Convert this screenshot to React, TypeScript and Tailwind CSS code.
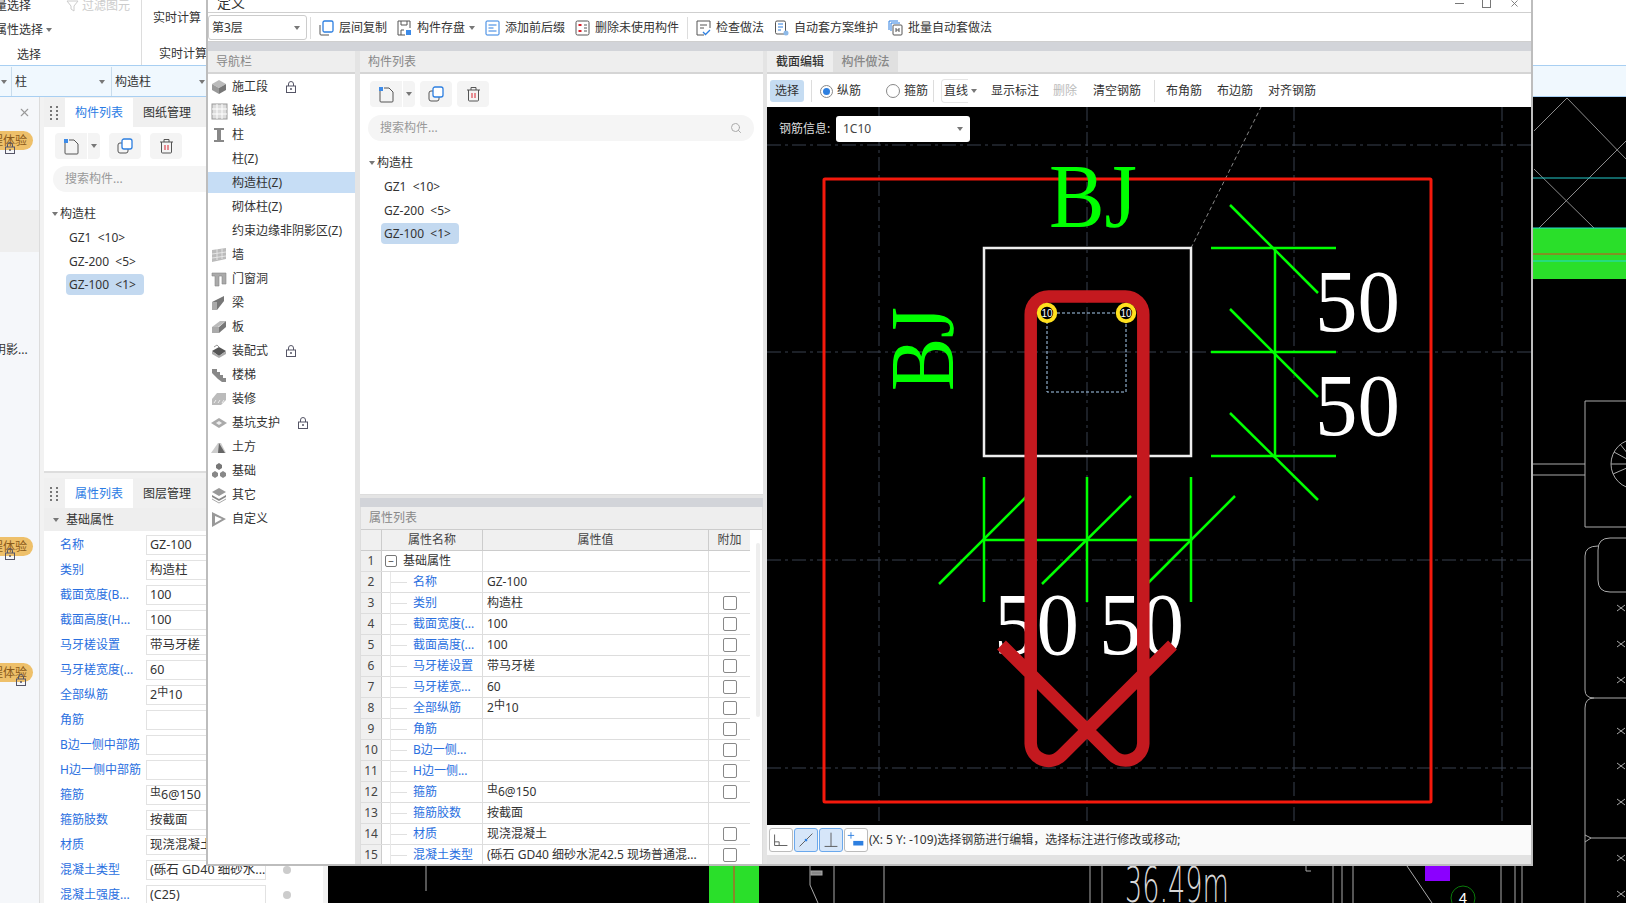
import { Search, X } from "lucide-react";

const Caret = ({ className = "" }: { className?: string }) => (
  <span className={`inline-block h-0 w-0 border-x-[3px] border-t-[4px] border-x-transparent border-t-[#777] ${className}`} />
);

const CopyIcon = () => (
  <svg width="16" height="16" viewBox="0 0 16 16" fill="none">
    <rect x="1" y="5" width="10" height="10" rx="2" stroke="#555" />
    <rect x="5" y="1" width="10" height="10" rx="2" fill="#fff" stroke="#2d7fe0" strokeWidth="1.3" />
  </svg>
);

const NewIcon = () => (
  <svg width="17" height="17" viewBox="0 0 17 17" fill="none">
    <path d="M2 5v10a1 1 0 0 0 1 1h11a1 1 0 0 0 1-1V6l-4-4H6" stroke="#555" />
    <rect x="1" y="1" width="4" height="4" fill="#3d8be8" />
  </svg>
);

const TrashIcon = () => (
  <svg width="15" height="16" viewBox="0 0 15 16" fill="none">
    <path d="M1 4h13M5 4V1.5h5V4M2.5 4v10a1 1 0 0 0 1 1h8a1 1 0 0 0 1-1V4" stroke="#555" />
    <path d="M6 7v5M9 7v5" stroke="#d9232e" />
  </svg>
);

const LockIcon = () => (
  <svg width="10" height="12" viewBox="0 0 10 12" fill="none">
    <path d="M2.5 5V3a2.5 2.5 0 0 1 5 0v2" stroke="#556" />
    <rect x=".5" y="5" width="9" height="6.5" stroke="#556" />
    <circle cx="5" cy="8" r="1" fill="#556" />
  </svg>
);

const ToolIcon = ({ kind }: { kind: string }) => (
  <svg width="15" height="16" viewBox="0 0 15 16" fill="none">
    {kind === "copy" && (
      <>
        <path d="M1 5v9a1 1 0 0 0 1 1h8" stroke="#555" />
        <rect x="4" y="1" width="10" height="11" rx="1.5" stroke="#2d7fe0" strokeWidth="1.3" />
      </>
    )}
    {kind === "save" && (
      <>
        <path d="M1 1h12v7M1 1v14h7" stroke="#555" />
        <path d="M4 1v4h6V1M4 15v-5h3" stroke="#555" />
        <rect x="9" y="10" width="5" height="5" fill="#3d8be8" />
      </>
    )}
    {kind === "fix" && (
      <>
        <rect x="1" y="1" width="13" height="14" rx="1" stroke="#2d7fe0" />
        <path d="M3.5 5h8M3.5 8h5M3.5 11h8" stroke="#2d7fe0" />
      </>
    )}
    {kind === "del" && (
      <>
        <rect x="1" y="1" width="13" height="14" rx="1.5" stroke="#555" />
        <path d="M3.5 4h3v2h-3zM3.5 10h3v2h-3z" fill="#d9232e" />
        <path d="M9 5h3M9 8h3M9 11h3" stroke="#555" />
      </>
    )}
    {kind === "check" && (
      <>
        <path d="M8 15H1V1h13v7" stroke="#555" />
        <path d="M4 5h7M4 8h4" stroke="#555" />
        <path d="M7 12l2.5 2.5L14 10" stroke="#2d7fe0" strokeWidth="1.3" />
      </>
    )}
    {kind === "auto" && (
      <>
        <rect x="1.5" y="1" width="10" height="13" rx="1.5" stroke="#555" />
        <path d="M4 4h5M4 7h5M4 10h3" stroke="#2d7fe0" />
        <circle cx="12" cy="13" r="2.5" fill="#8db9e8" />
      </>
    )}
    {kind === "batch" && (
      <>
        <path d="M1 10V1h9" stroke="#2d7fe0" />
        <path d="M3 11V3h9" stroke="#2d7fe0" />
        <rect x="5" y="5" width="9" height="10" rx="1" stroke="#555" />
        <path d="M8 8v4M11 8v4M8 10h3" stroke="#555" />
      </>
    )}
  </svg>
);

const NavIcon = ({ kind }: { kind: string }) => (
  <svg width="18" height="18" viewBox="0 0 18 18" className="shrink-0">
    {kind === "seg" && (
      <>
        <path d="M9 2l7 4-7 4-7-4z" fill="#bbb" />
        <path d="M2 6l7 4v6l-7-4z" fill="#999" />
        <path d="M16 6l-7 4v6l7-4z" fill="#777" />
      </>
    )}
    {kind === "axis" && (
      <>
        <rect x="2" y="2" width="15" height="15" fill="#ddd" stroke="#999" />
        <path d="M7 2v15M12 2v15M2 7h15M2 12h15" stroke="#fff" />
      </>
    )}
    {kind === "col" && <path d="M4 2h10v2h-3v10h3v2H4v-2h3V4H4z" fill="#888" />}
    {kind === "wall" && (
      <>
        <path d="M2 4l14-2v11L2 16z" fill="#bbb" />
        <path d="M2 8l14-2M2 12l14-2M7 3v11M12 3v10" stroke="#eee" strokeWidth=".8" />
      </>
    )}
    {kind === "door" && <path d="M2 3h14v11h-4V6H9v10H5V6H2z" fill="#aaa" stroke="#888" strokeWidth=".6" />}
    {kind === "beam" && (
      <>
        <path d="M2 8l12-6v5L7 16H2z" fill="#777" />
        <path d="M2 8h5v8H2z" fill="#aaa" />
      </>
    )}
    {kind === "slab" && (
      <>
        <path d="M2 9l8-6h6l-8 6z" fill="#bbb" />
        <path d="M2 9h7v6H2z" fill="#aaa" />
        <path d="M9 9l7-6v6l-7 6z" fill="#777" />
      </>
    )}
    {kind === "prefab" && (
      <>
        <path d="M2 9l7-4 7 4-7 5z" fill="#555" />
        <path d="M2 9v3l7 4 7-4V9l-7 5z" fill="#aaa" />
        <path d="M4 5l3-2 2 2" stroke="#999" fill="none" />
      </>
    )}
    {kind === "stair" && <path d="M2 3h5v3h3v3h3v3h3v4h-4l-4-3-3-3-3-3z" fill="#888" />}
    {kind === "deco" && (
      <>
        <path d="M2 9l5-6h9v7l-5 5H2z" fill="#bbb" />
        <path d="M4 13l2-3M8 13l2-3M12 13l2-3" stroke="#eee" />
      </>
    )}
    {kind === "pit" && (
      <>
        <path d="M1 9l8-5 8 5-8 5z" fill="#aaa" />
        <path d="M6 9l3-2 3 2-3 2z" fill="#eee" />
      </>
    )}
    {kind === "earth" && (
      <>
        <path d="M1 15l7-10 3 0 5 10z" fill="#ccc" />
        <path d="M9 5l6 10H8z" fill="#666" />
      </>
    )}
    {kind === "found" && (
      <>
        <path d="M9 1l3 2v3l-3 2-3-2V3z" fill="#777" />
        <path d="M5 9l3 2v3l-3 2-3-2v-3zM13 9l3 2v3l-3 2-3-2v-3z" fill="#888" />
      </>
    )}
    {kind === "other" && (
      <>
        <path d="M9 2l7 4-7 4-7-4z" fill="#999" />
        <path d="M2 9l7 4 7-4v2l-7 4-7-4z" fill="#888" />
        <path d="M2 13l7 4 7-4" stroke="#aaa" fill="none" />
      </>
    )}
    {kind === "custom" && <path d="M2 2l14 7-14 8zM5 6v7l7-4z" fill="#999" fillRule="evenodd" />}
  </svg>
);

const navItems = [
  { label: "施工段", icon: "seg", lock: true },
  { label: "轴线", icon: "axis" },
  { label: "柱", icon: "col" },
  { label: "柱(Z)" },
  { label: "构造柱(Z)", active: true },
  { label: "砌体柱(Z)" },
  { label: "约束边缘非阴影区(Z)" },
  { label: "墙", icon: "wall" },
  { label: "门窗洞", icon: "door" },
  { label: "梁", icon: "beam" },
  { label: "板", icon: "slab" },
  { label: "装配式", icon: "prefab", lock: true },
  { label: "楼梯", icon: "stair" },
  { label: "装修", icon: "deco" },
  { label: "基坑支护", icon: "pit", lock: true },
  { label: "土方", icon: "earth" },
  { label: "基础", icon: "found" },
  { label: "其它", icon: "other" },
  { label: "自定义", icon: "custom" },
];

const toolItems = [
  { label: "层间复制", icon: "copy" },
  { label: "构件存盘", icon: "save", caret: true },
  { label: "添加前后缀", icon: "fix" },
  { label: "删除未使用构件", icon: "del", sep: true },
  { label: "检查做法", icon: "check" },
  { label: "自动套方案维护", icon: "auto" },
  { label: "批量自动套做法", icon: "batch" },
];

const Rebar = ({ sym, pre, post }: { sym: string; pre?: string; post: string }) => (
  <span>
    {pre}
    <span className="align-[3px] text-[11px] leading-[0]">{sym}</span>
    {post}
  </span>
);

const leftProps: { label: string; value?: React.ReactNode }[] = [
  { label: "名称", value: "GZ-100" },
  { label: "类别", value: "构造柱" },
  { label: "截面宽度(B...", value: "100" },
  { label: "截面高度(H...", value: "100" },
  { label: "马牙槎设置", value: "带马牙槎" },
  { label: "马牙槎宽度(...", value: "60" },
  { label: "全部纵筋", value: <Rebar pre="2" sym="中" post="10" /> },
  { label: "角筋" },
  { label: "B边一侧中部筋" },
  { label: "H边一侧中部筋" },
  { label: "箍筋", value: <Rebar sym="虫" post="6@150" /> },
  { label: "箍筋肢数", value: "按截面" },
  { label: "材质", value: "现浇混凝土" },
  { label: "混凝土类型", value: "(砾石 GD40 细砂水..." },
  { label: "混凝土强度...", value: "(C25)" },
];

const tableRows: { label: string; value?: React.ReactNode; check: boolean }[] = [
  { label: "名称", value: "GZ-100", check: false },
  { label: "类别", value: "构造柱", check: true },
  { label: "截面宽度(...", value: "100", check: true },
  { label: "截面高度(...", value: "100", check: true },
  { label: "马牙槎设置", value: "带马牙槎", check: true },
  { label: "马牙槎宽...", value: "60", check: true },
  { label: "全部纵筋", value: <Rebar pre="2" sym="中" post="10" />, check: true },
  { label: "角筋", check: true },
  { label: "B边一侧...", check: true },
  { label: "H边一侧...", check: true },
  { label: "箍筋", value: <Rebar sym="虫" post="6@150" />, check: true },
  { label: "箍筋胶数", value: "按截面", check: false },
  { label: "材质", value: "现浇混凝土", check: true },
  { label: "混凝土类型", value: "(砾石 GD40 细砂水泥42.5  现场普通混...", check: true },
];

const Pill = ({ className = "", lockLeft = "left-[5px]" }: { className?: string; lockLeft?: string }) => (
  <div className={`relative h-[19px] w-[33px] ${className}`}>
    <div className="flex h-full justify-end overflow-hidden rounded-r-full bg-[#eec06a] pr-[6px] text-[12px] leading-[19px] whitespace-nowrap text-[#8a5a1a]">
      程体验
    </div>
    <span className={`absolute top-[11px] ${lockLeft}`}>
      <LockIcon />
    </span>
  </div>
);

function Strip() {
  return (
    <div className="flex w-[40px] shrink-0 flex-col overflow-hidden border-r border-[#dcdcdc] bg-[#f5f7fa]">
      <div className="flex h-[30px] items-center justify-end pr-[8px]">
        <X size={13} className="text-[#999]" />
      </div>
      <Pill className="mt-[4px]" />
      <div className="mt-[60px] h-[42px] bg-[#eeeeee]" />
      <div className="mt-[90px] ml-[-6px] whitespace-nowrap text-[12px] leading-[16px] text-[#333]">阴影...</div>
      <Pill className="mt-[179px]" />
      <Pill className="mt-[107px]" lockLeft="left-[16px]" />
    </div>
  );
}

const Grip = () => (
  <div className="grid w-[21px] shrink-0 grid-cols-2 place-content-center justify-center gap-[2px] px-[6px]">
    {[0, 1, 2, 3, 4, 5, 6, 7].map((i) => (
      <span key={i} className="h-[2px] w-[2px] bg-[#777]" />
    ))}
  </div>
);

const PanelTabs = ({ a, b }: { a: string; b: string }) => (
  <div className="flex h-[30px] shrink-0 bg-[#f0f0f0] pt-[1px] text-[12px]">
    <Grip />
    <div className="flex w-[68px] items-center justify-center bg-white text-[#2a7be4]">{a}</div>
    <div className="ml-[10px] flex items-center text-[#333]">{b}</div>
  </div>
);

function LeftPanel() {
  return (
    <div className="flex w-[279px] shrink-0 flex-col gap-[5px]">
      <div className="flex h-[376px] flex-col border-b-2 border-[#ddd] bg-white">
        <PanelTabs a="构件列表" b="图纸管理" />
        <div className="mt-[6px] ml-[11px] flex items-center">
          <div className="flex h-[26px] w-[32px] items-center justify-center rounded-l bg-[#f4f4f4]">
            <NewIcon />
          </div>
          <div className="ml-[1px] flex h-[26px] w-[12px] items-center justify-center rounded-r bg-[#f4f4f4]">
            <Caret />
          </div>
          <div className="ml-[9px] flex h-[26px] w-[32px] items-center justify-center rounded bg-[#f4f4f4]">
            <CopyIcon />
          </div>
          <div className="ml-[9px] flex h-[26px] w-[32px] items-center justify-center rounded bg-[#f4f4f4]">
            <TrashIcon />
          </div>
        </div>
        <div className="mt-[7px] ml-[9px] flex h-[26px] w-[230px] items-center rounded-full bg-[#f5f5f5] px-[12px] text-[12px] text-[#999]">
          搜索构件...
        </div>
        <Tree left={8} indent={14} />
      </div>
      <div className="flex flex-1 flex-col overflow-hidden bg-white text-[12px]">
        <PanelTabs a="属性列表" b="图层管理" />
        <div className="flex h-[23px] shrink-0 items-center bg-[#eeeeee] pl-[9px] text-[#333]">
          <Caret />
          <span className="ml-[7px]">基础属性</span>
        </div>
        <div className="flex flex-col gap-[5px] pt-[4px]">
          {leftProps.map((p, i) => (
            <div key={p.label} className="flex h-[20px] items-center">
              <span className="ml-[16px] w-[86px] shrink-0 whitespace-nowrap text-[#2a6fe0]">{p.label}</span>
              <span className="h-[20px] w-[120px] shrink-0 overflow-hidden border border-[#e2e2e2] px-[3px] text-[12.5px] leading-[18px] whitespace-nowrap text-[#333]">
                {p.value}
              </span>
              {i > 12 && <span className="ml-[17px] h-[8px] w-[8px] rounded-full bg-[#ccc]" />}
            </div>
          ))}
        </div>
      </div>
    </div>
  );
}

function Tree({ left, indent }: { left: number; indent: number }) {
  return (
    <div className="mt-[10px] text-[12px] text-[#333]" style={{ marginLeft: left }}>
      <div className="flex h-[24px] items-center">
        <Caret />
        <span className="ml-[2px]">构造柱</span>
      </div>
      <div className="flex h-[24px] items-center" style={{ marginLeft: indent + 3 }}>GZ1&nbsp;&nbsp;&lt;10&gt;</div>
      <div className="flex h-[23px] items-center" style={{ marginLeft: indent + 3 }}>GZ-200&nbsp;&nbsp;&lt;5&gt;</div>
      <div className="mt-[1px] flex h-[21px] w-[78px] items-center rounded bg-[#c3d9f0] pl-[3px]" style={{ marginLeft: indent }}>GZ-100&nbsp;&nbsp;&lt;1&gt;</div>
    </div>
  );
}

function NavPanel() {
  return (
    <div className="flex w-[147px] shrink-0 flex-col bg-white">
      <div className="flex h-[23px] shrink-0 items-center border-b-2 border-[#d5d5d5] bg-[#eeeeee] pl-[8px] text-[12px] text-[#888]">导航栏</div>
      <div className="pt-[2px] text-[12px] text-[#333]">
        {navItems.map((n) => (
          <div key={n.label} className={`mb-[3px] flex h-[21px] items-center pl-[2px] ${n.active ? "bg-[#c6ddf5]" : ""}`}>
            <span className="flex w-[22px] shrink-0 justify-start">{n.icon && <NavIcon kind={n.icon} />}</span>
            <span className="whitespace-nowrap">{n.label}</span>
            {n.lock && (
              <span className="ml-[18px]">
                <LockIcon />
              </span>
            )}
          </div>
        ))}
      </div>
    </div>
  );
}

function ComponentList() {
  return (
    <div className="flex h-[444px] shrink-0 flex-col border-b border-[#ddd] bg-white">
      <div className="flex h-[23px] shrink-0 items-center border-b-2 border-[#d5d5d5] bg-[#eeeeee] pl-[8px] text-[12px] text-[#888]">构件列表</div>
      <div className="mt-[7px] ml-[10px] flex items-center">
        <div className="flex h-[26px] w-[32px] items-center justify-center rounded-l bg-[#f4f4f4]">
          <NewIcon />
        </div>
        <div className="ml-[1px] flex h-[26px] w-[12px] items-center justify-center rounded-r bg-[#f4f4f4]">
          <Caret />
        </div>
        <div className="ml-[5px] flex h-[26px] w-[32px] items-center justify-center rounded bg-[#f4f4f4]">
          <CopyIcon />
        </div>
        <div className="ml-[5px] flex h-[26px] w-[32px] items-center justify-center rounded bg-[#f4f4f4]">
          <TrashIcon />
        </div>
      </div>
      <div className="mt-[8px] ml-[8px] flex h-[26px] w-[386px] items-center justify-between rounded-full bg-[#f5f5f5] px-[12px] text-[12px] text-[#999]">
        <span>搜索构件...</span>
        <Search size={12} className="text-[#aaa]" />
      </div>
      <Tree left={9} indent={12} />
    </div>
  );
}

function PropTable() {
  return (
    <div className="flex min-h-0 flex-1 flex-col overflow-hidden border-x border-[#ddd] bg-white">
      <div className="flex h-[23px] shrink-0 items-center border-b border-[#ccc] bg-[#eeeeee] pl-[8px] text-[12px] text-[#888]">属性列表</div>
      <div className="flex min-h-0 flex-1">
        <div className="w-[389px] shrink-0 text-[12px]">
          <div className="flex h-[21px] border-b border-[#ccc] bg-[#f0f0f0] text-center text-[#444]">
            <div className="w-[21px] border-r border-[#ccc]" />
            <div className="w-[101px] border-r border-[#ccc] leading-[20px]">属性名称</div>
            <div className="w-[226px] border-r border-[#ccc] leading-[20px]">属性值</div>
            <div className="flex-1 leading-[20px]">附加</div>
          </div>
          <Row n={1}>
            <div className="flex w-[101px] items-center border-r border-[#ddd] pl-[3px] text-[#333]">
              <span className="flex h-[12px] w-[12px] items-center justify-center rounded-[2px] border border-[#777] text-[10px] leading-none">−</span>
              <span className="ml-[6px]">基础属性</span>
            </div>
            <div className="w-[226px] border-r border-[#ddd]" />
          </Row>
          {tableRows.map((r, i) => (
            <Row key={r.label} n={i + 2}>
              <div className="flex w-[101px] items-center border-r border-[#ddd] pl-[8px] whitespace-nowrap text-[#2a6fe0]">
                <span className="mr-[6px] h-[21px] w-[17px] shrink-0 border-l border-[#e8e8e8] bg-[linear-gradient(#e0e0e0,#e0e0e0)] bg-[length:100%_1px] bg-center bg-no-repeat" />
                {r.label}
              </div>
              <div className="w-[226px] overflow-hidden border-r border-[#ddd] pl-[4px] whitespace-nowrap text-[#333]">{r.value}</div>
              <div className="flex flex-1 items-center justify-center">
                {r.check && <span className="h-[14px] w-[14px] rounded-[2px] border border-[#888] bg-white" />}
              </div>
            </Row>
          ))}
        </div>
        <div className="mt-[13px] ml-[6px] h-[174px] w-[4px] rounded bg-[#eeeeee]" />
      </div>
    </div>
  );
}

const Row = ({ n, children }: { n: number; children: React.ReactNode }) => (
  <div className="flex h-[21px] border-b border-[#ddd] leading-[20px]">
    <div className="w-[21px] shrink-0 border-r border-[#ccc] bg-[#f0f0f0] text-center text-[#444]">{n}</div>
    {children}
  </div>
);

function Section() {
  return (
    <div className="flex min-w-0 flex-1 flex-col bg-[#e2e2e2]">
      <div className="flex h-[23px] shrink-0 border-b-2 border-[#d5d5d5] bg-[#eeeeee] text-[12px] font-medium">
        <div className="flex w-[66px] items-center justify-center text-[#333]">截面编辑</div>
        <div className="flex w-[65px] items-center justify-center bg-[#e0e0e0] text-[#888]">构件做法</div>
      </div>
      <div className="flex h-[33px] shrink-0 items-center bg-white pt-[1px] text-[12px] whitespace-nowrap text-[#333]">
        <div className="ml-[3px] flex h-[22px] w-[34px] items-center justify-center rounded-[3px] bg-[#c5dcf2]">选择</div>
        <div className="ml-[7px] h-[22px] w-px bg-[#ddd]" />
        <span className="ml-[8px] flex h-[13px] w-[13px] items-center justify-center rounded-full border border-[#888]">
          <span className="h-[7px] w-[7px] rounded-full bg-[#2d7fe0]" />
        </span>
        <span className="ml-[4px]">纵筋</span>
        <span className="ml-[25px] h-[14px] w-[14px] rounded-full border border-[#888]" />
        <span className="ml-[4px]">箍筋</span>
        <div className="ml-[5px] h-[22px] w-px bg-[#ddd]" />
        <div className="ml-[7px] flex h-[24px] w-[27px] items-center rounded-l border-y border-l border-[#e5e5e5] pl-[2px]">直线</div>
        <Caret className="ml-[3px]" />
        <span className="ml-[14px]">显示标注</span>
        <span className="ml-[14px] text-[#bbb]">删除</span>
        <span className="ml-[16px]">清空钢筋</span>
        <div className="ml-[13px] h-[22px] w-px bg-[#ddd]" />
        <span className="ml-[11px]">布角筋</span>
        <span className="ml-[15px]">布边筋</span>
        <span className="ml-[15px]">对齐钢筋</span>
      </div>
      <div className="relative h-[718px] shrink-0 bg-black">
        <RebarCanvas />
        <div className="absolute top-[9px] left-[12px] flex items-center text-[12px] text-[#ddd]">
          <span className="w-[57px]">钢筋信息:</span>
          <div className="flex h-[26px] w-[134px] items-center justify-between rounded-[3px] bg-white px-[7px] text-[#444]">
            1C10
            <Caret />
          </div>
        </div>
      </div>
      <div className="flex h-[30px] shrink-0 items-center bg-[#fafafa] pl-[2px] text-[12px] whitespace-nowrap text-[#333]">
        <StatusBtn>
          <path d="M5 6v12h14M5 14h5v4" stroke="#555" fill="none" />
        </StatusBtn>
        <StatusBtn on>
          <path d="M5 19L19 5" stroke="#555" />
          <circle cx="12" cy="12" r="1.5" fill="#2d7fe0" />
        </StatusBtn>
        <StatusBtn on>
          <path d="M5 19h14M12 4v15" stroke="#555" />
        </StatusBtn>
        <StatusBtn>
          <path d="M3 7h7M6.5 3.5v7" stroke="#2d7fe0" />
          <rect x="9" y="13" width="11" height="5" fill="#2d7fe0" />
        </StatusBtn>
        <span>(X: 5 Y: -109)选择钢筋进行编辑，选择标注进行修改或移动;</span>
      </div>
    </div>
  );
}

const StatusBtn = ({ on, children }: { on?: boolean; children: React.ReactNode }) => (
  <div className={`mr-px flex h-[24px] w-[24px] items-center justify-center rounded-[3px] border ${on ? "border-[#6aa8ec] bg-[#d6e6f9]" : "border-[#bbb] bg-white"}`}>
    <svg width="22" height="22" viewBox="0 0 24 24">{children}</svg>
  </div>
);

const ticks = [
  [1231, 205, 1319, 293],
  [1231, 309, 1319, 397],
  [1231, 413, 1319, 500],
  [940, 584, 1028, 496],
  [1043, 584, 1132, 496],
  [1148, 584, 1236, 496],
];

function RebarCanvas() {
  return (
    <svg width="765" height="718" viewBox="768 107 765 718" className="absolute inset-0">
      <g stroke="#39404e" strokeWidth="1" strokeDasharray="14 4 3 4" fill="none">
        {[880, 1088, 1295, 1503].map((x) => (
          <path key={x} d={`M${x} 107V822`} />
        ))}
        {[145, 352, 560, 768].map((y) => (
          <path key={y} d={`M768 ${y}H1533`} />
        ))}
      </g>
      <path d="M1192 248L1262 107" stroke="#888" strokeDasharray="4 3" />
      <rect x="825" y="179" width="607" height="623" rx="1" fill="none" stroke="#f4190c" strokeWidth="3" />
      <rect x="985" y="248" width="207" height="208" fill="none" stroke="#eeeeee" strokeWidth="2.5" />
      <rect x="1048" y="313" width="79" height="79" fill="none" stroke="#a9cdf0" strokeDasharray="3 2" />
      <g className="font-['Liberation_Serif',serif]" fontSize="90" fill="#00ff00">
        <text x="1050" y="227" textLength="88" lengthAdjust="spacingAndGlyphs">BJ</text>
        <text transform="translate(954 391) rotate(-90)" textLength="84" lengthAdjust="spacingAndGlyphs">BJ</text>
      </g>
      <g className="font-['Liberation_Serif',serif]" fontSize="88" fill="#ffffff">
        {[
          [1316, 331],
          [1316, 435],
          [995, 654],
          [1100, 654],
        ].map(([x, y]) => (
          <text key={x + "-" + y} x={x} y={y} textLength="85" lengthAdjust="spacingAndGlyphs">50</text>
        ))}
      </g>
      <g stroke="#00ff00" strokeWidth="2.5" fill="none">
        <path d="M1212 248H1337M1212 352H1337M1212 456H1337M1276 248V456" />
        <path d="M985 477V602M1088 477V602M1192 477V602M985 540H1192" />
        {ticks.map(([a, b, c, d]) => (
          <path key={a + "-" + b} d={`M${a} ${b}L${c} ${d}`} />
        ))}
      </g>
      <path
        d="M1173.5 645L1062.5 755.5A18 18 0 0 1 1031.7 743.5V314.5A18 18 0 0 1 1049.7 296.5H1126.3A18 18 0 0 1 1144.3 314.5V743.5A18 18 0 0 1 1113.8 755.5L1002.5 645"
        fill="none"
        stroke="#c4191f"
        strokeWidth="12.5"
      />
      {[1048, 1127].map((x) => (
        <g key={x}>
          <circle cx={x} cy="313" r="8.2" fill="#000" stroke="#ffe01e" strokeWidth="4" />
          <text x={x} y="317" textAnchor="middle" fontSize="10" fill="#fff" className="font-['Liberation_Sans',sans-serif]">10</text>
        </g>
      ))}
    </svg>
  );
}

const Dialog = () => (
  <div className="absolute top-0 left-[206px] flex h-[866px] w-[1327px] flex-col overflow-hidden border-r-2 border-b-2 border-l-2 border-[#bdbdbd] bg-[#e4e4e4]">
    <div className="flex h-[12px] shrink-0 items-center justify-between overflow-hidden bg-white">
      <span className="mt-[-6px] ml-[9px] text-[14px] leading-none text-[#333]">定义</span>
      <div className="mt-[-6px] mr-[11px] flex items-center gap-[18px] text-[#777]">
        <span className="h-px w-[9px] bg-[#777]" />
        <span className="h-[9px] w-[9px] border border-[#777]" />
        <X size={11} />
      </div>
    </div>
    <div className="flex h-[30px] shrink-0 items-center border-y border-[#cfcfcf] bg-white pt-[1px] text-[12px] whitespace-nowrap text-[#333]">
      <div className="flex h-[25px] w-[99px] items-center justify-between rounded-[3px] border border-[#ccc] px-[3px]">
        第3层
        <Caret className="mr-[3px]" />
      </div>
      <div className="ml-[3px] h-[22px] w-px bg-[#ddd]" />
      <div className="ml-[8px] flex items-center">
        {toolItems.map((t) => (
          <div key={t.label} className="flex items-center">
            <ToolIcon kind={t.icon} />
            <span className="ml-[5px]">{t.label}</span>
            {t.caret && <Caret className="ml-[4px]" />}
            {t.sep ? <div className="mx-[8px] h-[22px] w-px bg-[#ddd]" /> : <span className="w-[10px]" />}
          </div>
        ))}
      </div>
    </div>
    <div className="h-[9px] shrink-0 bg-[#d2d4d9]" />
    <div className="flex min-h-0 flex-1">
      <NavPanel />
      <div className="flex w-[412px] shrink-0 flex-col pr-[4px] pl-[5px]">
        <ComponentList />
        <div className="h-[3px] shrink-0" />
        <div className="h-[9px] shrink-0 bg-[#d2d4d9]" />
        <PropTable />
      </div>
      <Section />
    </div>
  </div>
);

function CadBackground() {
  return (
    <svg width="1298" height="806" viewBox="328 97 1298 806" className="block">
      <g stroke="#8a8a8a" fill="none">
        <path d="M1534 131L1567 98L1626 159M1534 169L1594 228M1539 228L1626 141" />
      </g>
      <path d="M1533 178H1626" stroke="#22c9c9" />
      <rect x="1533" y="228" width="93" height="51" fill="#2adf2a" />
      <path d="M1533 228H1626M1533 261H1626" stroke="#22d9d0" />
      <path d="M1533 254H1626" stroke="#d8451e" />
      <g stroke="#aaa" fill="none">
        <path d="M1533 464H1585M1533 475H1585" />
        <path d="M1626 401H1585V527H1626" />
        <circle cx="1636" cy="464" r="25" />
        <path d="M1611 464H1636M1614 452L1636 464M1613 474L1636 464M1620 444L1636 464" />
        <path d="M1626 538H1610Q1598 538 1598 550V580Q1598 592 1610 592H1626" />
        <path d="M1598 546Q1585 546 1585 556V690Q1585 698 1594 698H1626" />
        <path d="M1594 698Q1585 698 1585 708V903" />
        <path d="M1585 835L1591 838H1626M1585 842L1591 838" />
        {[608, 644, 680, 731, 766, 802, 858, 894].map((y) => (
          <path key={y} d={`M1617 ${y - 3}L1625 ${y + 3}M1625 ${y - 3}L1617 ${y + 3}`} />
        ))}
      </g>
      <rect x="709" y="866" width="50" height="37" fill="#2adf2a" />
      <path d="M734 866V903" stroke="#e5322a" />
      <g stroke="#aaa" fill="none">
        <path d="M426 866V891" />
        <path d="M810 866V885L818 903M834 866V903M884 866V903" />
        <rect x="811" y="871" width="11" height="4" fill="#888" />
        <path d="M1090 866V903M1102 866V903" />
        <path d="M1306 866V871H1311M1333 866V903M1342 866V903M1353 866V903" />
        <path d="M1407 866L1432 903" />
        <path d="M1501 866V903M1515 866V903M1522 866V903" />
      </g>
      <text x="1125" y="902" fontSize="50" fill="#d8d8d8" textLength="104" lengthAdjust="spacingAndGlyphs" className="font-['DejaVu_Sans',sans-serif] font-extralight">36.49m</text>
      <rect x="1425" y="866" width="25" height="15" fill="#8b00ff" />
      <circle cx="1463" cy="898" r="12" fill="none" stroke="#0a7a0a" />
      <text x="1463" y="903" textAnchor="middle" fontSize="15" fill="#fff" className="font-['Liberation_Sans',sans-serif]">4</text>
    </svg>
  );
}

export default function App() {
  return (
    <div className="relative flex h-[903px] w-[1626px] flex-col overflow-hidden bg-white font-['Noto_Sans','Noto_Sans_CJK_SC',sans-serif] text-[12px]">
      <div className="flex h-[65px] shrink-0 text-[#333]">
        <div className="w-[142px] shrink-0 border-r border-[#ddd]">
          <div className="flex items-center whitespace-nowrap">
            <span className="mt-[-1px] ml-[-5px] leading-[12px]">量选择</span>
            <svg width="13" height="12" viewBox="0 0 13 12" fill="none" className="ml-[35px]">
              <path d="M1 1h11L8 6v5L5 9V6z" stroke="#ccc" />
            </svg>
            <span className="ml-[3px] leading-[12px] text-[#ccc]">过滤图元</span>
          </div>
          <div className="mt-[11px] flex items-center">
            <span className="ml-[-5px] leading-[14px]">属性选择</span>
            <Caret className="ml-[3px]" />
          </div>
          <div className="mt-[9px] ml-[17px]">选择</div>
        </div>
        <div className="ml-[11px] whitespace-nowrap">
          <div className="mt-[9px]">实时计算</div>
          <div className="mt-[18px] ml-[6px]">实时计算</div>
        </div>
      </div>
      <div className="flex h-[32px] shrink-0 items-center border-y border-[#a8cff2] bg-[#f0f8fe] pt-[1px] text-[#333]">
        <Caret className="ml-[1px]" />
        <div className="ml-[4px] flex h-full w-[100px] items-center justify-between border-l border-[#c9dcec] px-[3px]">
          柱
          <Caret className="mr-[3px]" />
        </div>
        <div className="flex h-full w-[97px] items-center justify-between border-l border-[#c9dcec] px-[3px]">
          构造柱
          <Caret />
        </div>
      </div>
      <div className="flex min-h-0 flex-1 bg-[#f2f2f2]">
        <Strip />
        <div className="w-[4px] shrink-0" />
        <LeftPanel />
        <div className="w-[5px] shrink-0" />
        <div className="bg-black">
          <CadBackground />
        </div>
      </div>
      <Dialog />
    </div>
  );
}
